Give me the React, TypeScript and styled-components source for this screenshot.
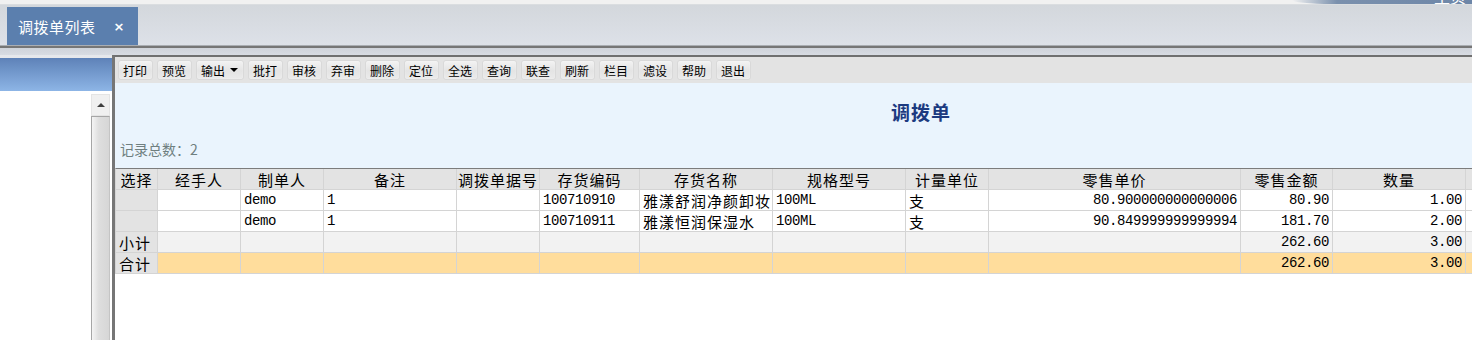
import React from 'react';
import styled, { createGlobalStyle } from 'styled-components';

const GlobalStyle = createGlobalStyle`
  html, body {
    margin: 0;
    padding: 0;
    width: 1472px;
    height: 340px;
    overflow: hidden;
    background: #ffffff;
    font-family: "Noto Sans CJK SC", "Liberation Sans", sans-serif;
  }
  * { box-sizing: border-box; }
`;

const Page = styled.div`
  width: 1472px;
  height: 340px;
  display: flex;
  flex-direction: column;
  overflow: hidden;
`;

const TopStrip = styled.div`
  height: 4px;
  background: #f1f1f1;
  display: flex;
  justify-content: flex-end;
  overflow: hidden;
`;

const Banner = styled.div`
  width: 180px;
  height: 4px;
  background: linear-gradient(90deg, rgba(112, 136, 168, 0) 0%, #7a90ad 25%, #6d86a8 100%);
  border-bottom-left-radius: 40px 4px;
  position: relative;
  overflow: hidden;
`;

const BannerText = styled.span`
  position: absolute;
  right: 6px;
  bottom: 0;
  color: #ffffff;
  font-size: 16px;
  line-height: 16px;
`;

const TabBar = styled.div`
  height: 41px;
  padding: 3px 0 0 7px;
  background: linear-gradient(#d3d7dc, #dde1e8);
  border-top: 1px solid #dadde0;
  display: flex;
  align-items: flex-end;
`;

const Tab = styled.div`
  width: 131px;
  height: 38px;
  background: #5b7fae;
  color: #ffffff;
  font-size: 15px;
  display: flex;
  align-items: center;
  padding-left: 11px;
  letter-spacing: 0.5px;
`;

const Close = styled.span`
  margin-left: 18px;
  font-family: "DejaVu Sans", sans-serif;
  font-weight: bold;
  font-size: 13px;
`;

const Divider = styled.div`
  height: 10px;
  border-top: 1px solid #a9adb2;
  background: linear-gradient(#767676 0, #767676 2px, #cfd3da 2px, #d8dce3 100%);
`;

const Body = styled.div`
  flex: 1;
  display: flex;
  min-height: 0;
`;

const SidePanel = styled.div`
  width: 112px;
  display: flex;
  flex-direction: column;
  padding-top: 3px;
  background: #e6e8ec;
`;

const SideHeader = styled.div`
  height: 33px;
  background: linear-gradient(#5e82b8, #8db5e6);
`;

const SideContent = styled.div`
  flex: 1;
  background: #ffffff;
  display: flex;
  justify-content: flex-end;
  padding: 3px 2px 0 0;
`;

const ScrollBar = styled.div`
  width: 19px;
  display: flex;
  flex-direction: column;
`;

const ScrollUp = styled.div`
  height: 22px;
  background: #f0f0f0;
  border: 1px solid #e4e4e4;
  display: flex;
  align-items: center;
  justify-content: center;

  &::after {
    content: '';
    border-left: 4px solid transparent;
    border-right: 4px solid transparent;
    border-bottom: 4px solid #404040;
  }
`;

const ScrollThumb = styled.div`
  flex: 1;
  border-left: 1px solid #a6a6a6;
  border-right: 1px solid #c4c4c4;
  border-top: 1px solid #a6a6a6;
  background: linear-gradient(90deg, #f4f4f4, #dedede 40%, #d6d6d6);
`;

const MainPanel = styled.div`
  flex: 1;
  min-width: 0;
  display: flex;
  flex-direction: column;
  border-left: 3px solid #767676;
  border-top: 2px solid #707070;
  overflow: hidden;
`;

const Toolbar = styled.div`
  height: 26px;
  background: #e3e3e3;
  display: flex;
  align-items: flex-start;
  gap: 4px;
  padding: 3px 0 0 3px;
`;

const ToolButton = styled.div<{ $wide?: boolean }>`
  width: ${(p) => (p.$wide ? 48 : 35)}px;
  height: 20px;
  border: 1px solid #d9d9d9;
  border-radius: 3px;
  background: linear-gradient(#f3f3f3, #e4e4e4 55%, #ebebeb);
  box-shadow: inset 0 0 1px #ffffff;
  display: flex;
  align-items: center;
  padding-left: 4px;
  font-size: 12px;
  color: #000000;
  gap: 5px;
`;

const Caret = styled.span`
  border-left: 4px solid transparent;
  border-right: 4px solid transparent;
  border-top: 4px solid #000000;
`;

const Report = styled.div`
  width: 1612px;
  flex: 1;
  display: flex;
  flex-direction: column;
`;

const ReportHead = styled.div`
  height: 85px;
  background: #eaf4fd;
  display: flex;
  flex-direction: column;
`;

const Title = styled.div`
  margin-top: 17px;
  text-align: center;
  font-size: 19px;
  line-height: 24px;
  font-weight: bold;
  letter-spacing: 1px;
  color: #1c3a80;
`;

const RecordCount = styled.div`
  margin-top: 16px;
  padding-left: 5px;
  font-size: 14px;
  line-height: 18px;
  color: #6f7f80;
`;

const Grid = styled.div`
  border-top: 1px solid #7c7c7c;
  border-left: 1px solid #d4d4d4;
`;

const Row = styled.div<{ $cols: string; $bg: string }>`
  display: grid;
  grid-template-columns: ${(p) => p.$cols};
  height: 21px;
  background: ${(p) => p.$bg};
`;

const Cell = styled.div<{ $align?: string; $mono?: boolean; $shade?: boolean }>`
  border-right: 1px solid #d4d4d4;
  border-bottom: 1px solid #d4d4d4;
  padding: 0 3px;
  white-space: nowrap;
  overflow: hidden;
  display: flex;
  align-items: center;
  justify-content: ${(p) => (p.$align === 'right' ? 'flex-end' : p.$align === 'center' ? 'center' : 'flex-start')};
  background: ${(p) => (p.$shade ? '#e3e3e3' : 'transparent')};
  color: #000000;
  font-family: ${(p) => (p.$mono ? '"Liberation Mono", monospace' : '"Noto Sans CJK SC", sans-serif')};
  font-size: ${(p) => (p.$mono ? '14px' : '15px')};
  letter-spacing: ${(p) => (p.$mono ? '-0.4px' : '1px')};
`;

const buttons = ['打印', '预览', '输出', '批打', '审核', '弃审', '删除', '定位', '全选', '查询', '联查', '刷新', '栏目', '滤设', '帮助', '退出'];

type Col = { key: string; title: string; w: number; align: string; mono?: boolean };

const columns: Col[] = [
  { key: 'sel', title: '选择', w: 42, align: 'left' },
  { key: 'handler', title: '经手人', w: 83, align: 'left' },
  { key: 'maker', title: '制单人', w: 83, align: 'left', mono: true },
  { key: 'note', title: '备注', w: 133, align: 'left', mono: true },
  { key: 'billNo', title: '调拨单据号', w: 83, align: 'left', mono: true },
  { key: 'code', title: '存货编码', w: 100, align: 'left', mono: true },
  { key: 'name', title: '存货名称', w: 133, align: 'left' },
  { key: 'spec', title: '规格型号', w: 133, align: 'left', mono: true },
  { key: 'unit', title: '计量单位', w: 83, align: 'left' },
  { key: 'price', title: '零售单价', w: 252, align: 'right', mono: true },
  { key: 'amount', title: '零售金额', w: 92, align: 'right', mono: true },
  { key: 'qty', title: '数量', w: 133, align: 'right', mono: true },
  { key: 'extra', title: '', w: 263, align: 'left' },
];

const cols = columns.map((c) => `${c.w}px`).join(' ');

type Line = { bg: string; values: Record<string, string> };

const lines: Line[] = [
  {
    bg: '#ffffff',
    values: { maker: 'demo', note: '1', code: '100710910', name: '雅漾舒润净颜卸妆', spec: '100ML', unit: '支', price: '80.900000000000006', amount: '80.90', qty: '1.00' },
  },
  {
    bg: '#ffffff',
    values: { maker: 'demo', note: '1', code: '100710911', name: '雅漾恒润保湿水', spec: '100ML', unit: '支', price: '90.849999999999994', amount: '181.70', qty: '2.00' },
  },
  { bg: '#f2f2f2', values: { sel: '小计', amount: '262.60', qty: '3.00' } },
  { bg: '#ffdd9c', values: { sel: '合计', amount: '262.60', qty: '3.00' } },
];

export default function App() {
  return (
    <Page>
      <GlobalStyle />
      <TopStrip>
        <Banner>
          <BannerText>主页</BannerText>
        </Banner>
      </TopStrip>
      <TabBar>
        <Tab>
          调拨单列表<Close>×</Close>
        </Tab>
      </TabBar>
      <Divider />
      <Body>
        <SidePanel>
          <SideHeader />
          <SideContent>
            <ScrollBar>
              <ScrollUp />
              <ScrollThumb />
            </ScrollBar>
          </SideContent>
        </SidePanel>
        <MainPanel>
          <Toolbar>
            {buttons.map((b) => (
              <ToolButton key={b} $wide={b === '输出'}>
                {b}
                {b === '输出' && <Caret />}
              </ToolButton>
            ))}
          </Toolbar>
          <Report>
            <ReportHead>
              <Title>调拨单</Title>
              <RecordCount>记录总数：2</RecordCount>
            </ReportHead>
            <Grid>
              <Row $cols={cols} $bg="#e3e3e3">
                {columns.map((c) => (
                  <Cell key={c.key} $align="center">
                    {c.title}
                  </Cell>
                ))}
              </Row>
              {lines.map((line, i) => (
                <Row key={i} $cols={cols} $bg={line.bg}>
                  {columns.map((c) => (
                    <Cell key={c.key} $align={c.align} $mono={c.mono} $shade={c.key === 'sel'}>
                      {line.values[c.key] ?? ''}
                    </Cell>
                  ))}
                </Row>
              ))}
            </Grid>
          </Report>
        </MainPanel>
      </Body>
    </Page>
  );
}
